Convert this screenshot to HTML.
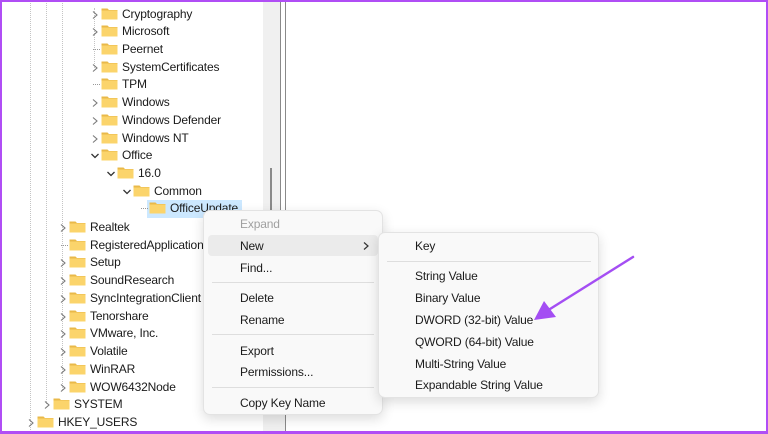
<!DOCTYPE html>
<html><head><meta charset="utf-8"><style>
*{margin:0;padding:0;box-sizing:border-box}
body{width:768px;height:434px;overflow:hidden;background:#fff;font-family:"Liberation Sans",sans-serif;font-size:12px;letter-spacing:-0.15px;color:#1a1a1a;position:relative}
.r{position:absolute;height:16px;line-height:16px;white-space:nowrap}
.f{position:absolute;width:17px;height:13px}
.c{position:absolute;width:8px;height:10px}
.vl{position:absolute;top:0;width:1px;border-left:1px dotted #c4c4c4}
.m{position:absolute;background:#f9f9f9;border:1px solid #e3e3e3;border-radius:7px;box-shadow:0 4px 12px rgba(0,0,0,.14)}
.mi{position:absolute;font-size:12px;line-height:16px;color:#1b1b1b}
.sep{position:absolute;height:1px;background:#dedede}
</style></head><body>
<div class="vl" style="left:30px;height:434px"></div>
<div class="vl" style="left:46px;height:404px"></div>
<div class="vl" style="left:62px;height:390px"></div>
<div class="vl" style="left:94px;top:8px;height:60px"></div>
<div style="position:absolute;left:147px;top:200px;width:95px;height:18px;background:#cce8ff"></div>
<div id="tree"></div>
<div style="position:absolute;left:263px;top:0;width:17px;height:210px;background:#f0f0f0"></div>
<div style="position:absolute;left:270px;top:168px;width:2px;height:42px;background:#8a8a8a"></div>
<div style="position:absolute;left:280px;top:0;width:1px;height:210px;background:#8a8a8a"></div>
<div style="position:absolute;left:285px;top:0;width:1px;height:434px;background:#8a8a8a"></div>
<div style="position:absolute;left:263px;top:210px;width:22px;height:224px;background:#f0f0f0"></div>
<svg width="0" height="0" style="position:absolute"><defs>
<symbol id="fo" viewBox="0 0 17 13"><path d="M0.5 1.5h6l1.5 1.5h8.5v9.5h-16z" fill="#e9b949"/><rect x="0.5" y="3.5" width="16" height="9" fill="#fbd46b"/></symbol>
<symbol id="cr" viewBox="0 0 8 10"><path d="M2 1.5l4 3.5-4 3.5" fill="none" stroke="#7a7a7a" stroke-width="1.1"/></symbol>
<symbol id="cd" viewBox="0 0 8 10"><path d="M0.5 3l3.5 3.5 3.5-3.5" fill="none" stroke="#333" stroke-width="1.3"/></symbol>
</defs></svg>
<script>
var rows=[
[14,"Cryptography",101,"r"],[31,"Microsoft",101,"r"],[49,"Peernet",101,""],[67,"SystemCertificates",101,"r"],[84,"TPM",101,""],[102,"Windows",101,"r"],[120,"Windows Defender",101,"r"],[138,"Windows NT",101,"r"],[155,"Office",101,"d"],[173,"16.0",117,"d"],[191,"Common",133,"d"],[208,"OfficeUpdate",149,""],
[227,"Realtek",69,"r"],[245,"RegisteredApplications",69,""],[262,"Setup",69,"r"],[280,"SoundResearch",69,"r"],[298,"SyncIntegrationClient",69,"r"],[316,"Tenorshare",69,"r"],[333,"VMware, Inc.",69,"r"],[351,"Volatile",69,"r"],[369,"WinRAR",69,"r"],[387,"WOW6432Node",69,"r"],[404,"SYSTEM",53,"r"],[422,"HKEY_USERS",37,"r"]];
var h="";
rows.forEach(function(r){var y=r[0],x=r[2];
h+='<svg class="f" style="left:'+x+'px;top:'+(y-7)+'px"><use href="#fo"/></svg>';
if(r[3])h+='<svg class="c" style="left:'+(x-10)+'px;top:'+(y-4)+'px"><use href="#'+(r[3]=="r"?"cr":"cd")+'"/></svg>';
else h+='<div style="position:absolute;left:'+(x-8)+'px;top:'+y+'px;width:7px;border-top:1px dotted #999"></div>';
h+='<div class="r" style="left:'+(x+21)+'px;top:'+(y-8)+'px">'+r[1]+'</div>';});
document.getElementById("tree").innerHTML=h;
</script>
<div class="m" style="left:203px;top:210px;width:180px;height:205px">
<div style="position:absolute;left:4px;top:24px;width:170px;height:21px;background:#ebebeb;border-radius:4px"></div>
<div class="mi" style="left:36px;top:5px;color:#a0a0a0">Expand</div>
<div class="mi" style="left:36px;top:27px">New</div>
<svg style="position:absolute;left:158px;top:30px" width="8" height="10"><path d="M2 1.5l4 3.5-4 3.5" fill="none" stroke="#333" stroke-width="1.2"/></svg>
<div class="mi" style="left:36px;top:49px">Find...</div>
<div class="sep" style="left:8px;top:71px;width:162px"></div>
<div class="mi" style="left:36px;top:79px">Delete</div>
<div class="mi" style="left:36px;top:101px">Rename</div>
<div class="sep" style="left:8px;top:123px;width:162px"></div>
<div class="mi" style="left:36px;top:132px">Export</div>
<div class="mi" style="left:36px;top:153px">Permissions...</div>
<div class="sep" style="left:8px;top:176px;width:162px"></div>
<div class="mi" style="left:36px;top:184px">Copy Key Name</div>
</div>
<div class="m" style="left:378px;top:232px;width:221px;height:166px">
<div class="mi" style="left:36px;top:5px">Key</div>
<div class="sep" style="left:8px;top:28px;width:204px"></div>
<div class="mi" style="left:36px;top:35px">String Value</div>
<div class="mi" style="left:36px;top:57px">Binary Value</div>
<div class="mi" style="left:36px;top:79px">DWORD (32-bit) Value</div>
<div class="mi" style="left:36px;top:101px">QWORD (64-bit) Value</div>
<div class="mi" style="left:36px;top:123px">Multi-String Value</div>
<div class="mi" style="left:36px;top:144px">Expandable String Value</div>
</div>
<svg style="position:absolute;left:0;top:0" width="768" height="434">
<path d="M633 257L550 309" stroke="#a44ef3" stroke-width="2.5" stroke-linecap="round"/>
<path d="M534 320L544 301L556 317z" fill="#a44ef3"/>
</svg>
<div style="position:absolute;left:0;top:0;width:768px;height:434px;border:2px solid #b04ef5;border-width:2px 2px 3px 2px"></div>
</body></html>
